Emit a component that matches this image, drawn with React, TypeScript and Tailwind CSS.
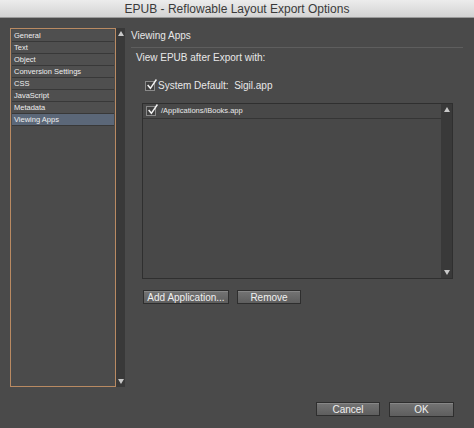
const font = { fontFamily: '"Liberation Sans", Arial, sans-serif' };

const sections = [
  'General',
  'Text',
  'Object',
  'Conversion Settings',
  'CSS',
  'JavaScript',
  'Metadata',
  'Viewing Apps',
];

function Check() {
  return (
    <span className="relative inline-block h-[10px] w-[10px] border border-[#8a8a8a] bg-[#3f3f3f]">
      <svg viewBox="0 0 10 10" className="absolute -top-[3px] left-[0px] h-[11px] w-[11px]">
        <path d="M1.5 5.5 L4 8.5 L9.5 0.5" fill="none" stroke="#f2f2f2" strokeWidth="1.4" />
      </svg>
    </span>
  );
}

function ScrollBar({ className }: { className: string }) {
  return (
    <div className={`flex flex-col items-center justify-between bg-[#393939] py-[3px] ${className}`}>
      <svg viewBox="0 0 6 5" className="h-[5px] w-[6px]">
        <path d="M3 0 L6 5 L0 5 Z" fill="#c8c8c8" />
      </svg>
      <svg viewBox="0 0 6 5" className="h-[5px] w-[6px]">
        <path d="M0 0 L6 0 L3 5 Z" fill="#c8c8c8" />
      </svg>
    </div>
  );
}

function Btn({ label, className }: { label: string; className: string }) {
  return (
    <button
      className={`flex items-center justify-center border border-[#2e2e2e] bg-gradient-to-b from-[#747474] to-[#5e5e5e] text-[10px] text-[#f0f0f0] shadow-[inset_0_1px_0_rgba(255,255,255,0.15)] ${className}`}
    >
      {label}
    </button>
  );
}

export default function App() {
  return (
    <div className="flex h-[428px] w-[474px] flex-col bg-[#4a4a4a]" style={font}>
      {/* Title bar */}
      <div className="flex h-[18px] items-center justify-center border-b border-[#9a9a9a] bg-gradient-to-b from-[#ececec] to-[#d3d3d3] text-[12px] text-[#3a3a3a]">
        EPUB - Reflowable Layout Export Options
      </div>

      <div className="flex flex-1 pl-[10px] pt-[10px]">
        {/* Left list */}
        <div className="flex h-[359px]">
          <div className="w-[106px] border border-[#b98a62] bg-[#4b4b4b] p-[1px]">
            {sections.map((s) => (
              <div
                key={s}
                className={`h-[12px] border-b border-[#383838] pl-[2px] text-[7.5px] leading-[11px] text-[#eeeeee] ${
                  s === 'Viewing Apps' ? 'bg-[#5b6778]' : 'bg-[#4f4f4f]'
                }`}
              >
                {s}
              </div>
            ))}
          </div>
          <ScrollBar className="w-[9px]" />
        </div>

        {/* Right panel */}
        <div className="ml-[6px] flex w-[332px] flex-col">
          <div className="border-b border-[#5e5e5e] pb-[4px] pt-[0px] text-[10px] text-[#e8e8e8]">Viewing Apps</div>
          <div className="mt-[2px] pl-[5px] text-[10px] text-[#e8e8e8]">View EPUB after Export with:</div>
          <div className="mt-[13px] flex items-center gap-[3px] pl-[14px] text-[10px] text-[#e8e8e8]">
            <Check />
            <span>System Default:&nbsp; Sigil.app</span>
          </div>

          <div className="ml-[11px] mt-[10px] flex h-[176px] w-[311px] border border-[#2f2f2f] bg-[#484848]">
            <div className="flex-1">
              <div className="flex h-[15px] items-center gap-[5px] border-b border-[#353535] pl-[3px] text-[7.5px] text-[#e8e8e8]">
                <Check />
                <span>/Applications/iBooks.app</span>
              </div>
            </div>
            <ScrollBar className="w-[11px]" />
          </div>

          <div className="ml-[12px] mt-[11px] flex gap-[8px]">
            <Btn label="Add Application..." className="h-[14px] w-[86px]" />
            <Btn label="Remove" className="h-[14px] w-[64px]" />
          </div>

          <div className="mt-auto mb-[11px] flex justify-end gap-[9px] pr-[9px]">
            <Btn label="Cancel" className="h-[14px] w-[64px]" />
            <Btn label="OK" className="h-[15px] w-[65px] border-[#1e1e1e]" />
          </div>
        </div>
      </div>
    </div>
  );
}
